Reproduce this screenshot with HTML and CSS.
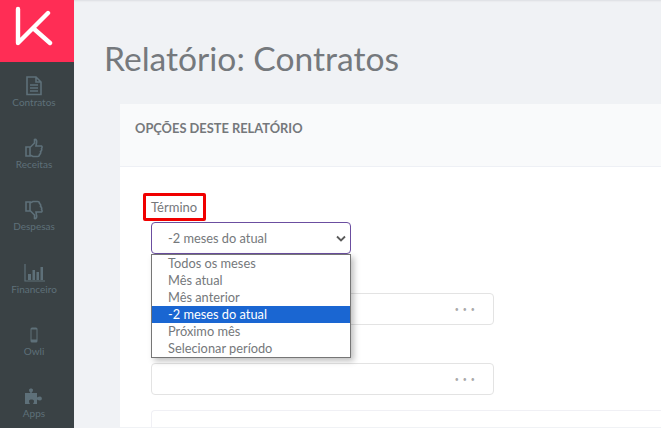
FILE: index.html
```html
<!DOCTYPE html>
<html lang="pt-BR">
<head>
    <meta charset="UTF-8">
    <title>Relatório: Contratos</title>
    <link rel="stylesheet" href="styles.css">
</head>
<body>

    <aside class="sidebar">
        <div class="logo">
            <svg width="38" height="40" viewBox="0 0 38 40">
                <path d="M3 3V37L33 7M18 22L35 37" fill="none" stroke="#fff" stroke-width="4.400" stroke-linecap="round" stroke-linejoin="round"/>
            </svg>
        </div>
        <nav class="nav">
            <a class="nav-item">
                <svg width="18" height="20" viewBox="0 0 18 20"><path d="M2 1H11L16 6V18.500H2ZM11 1V6H16M5 9H13M5 12H13M5 15H13" fill="none" stroke="#5e7079" stroke-width="1.600"/></svg>
                <span>Contratos</span>
            </a>
            <a class="nav-item">
                <svg width="18" height="20" viewBox="0 0 18 20"><path d="M1 9H5V18H1ZM5 9.500L9.500 5V1.500C11.500 1 12 3 11.500 5L11 8H16.500C17.500 8.500 17 10 16.500 10.500C17 12 16.500 13 15.500 13.500C16 15 15.500 16 14.500 16.500C14.500 18 14 18.500 12.500 18.500H8L5 17" fill="none" stroke="#5e7079" stroke-width="1.600"/></svg>
                <span>Receitas</span>
            </a>
            <a class="nav-item">
                <svg width="18" height="20" viewBox="0 0 18 20"><path d="M1 2H5V11H1ZM5 10.500L9.500 15V18.500C11.500 19 12 17 11.500 15L11 12H16.500C17.500 11.500 17 10 16.500 9.500C17 8 16.500 7 15.500 6.500C16 5 15.500 4 14.500 3.500C14.500 2 14 1.500 12.500 1.500H8L5 3" fill="none" stroke="#5e7079" stroke-width="1.600"/></svg>
                <span>Despesas</span>
            </a>
            <a class="nav-item">
                <svg width="21" height="20" viewBox="0 0 21 20"><path d="M1 1V18H21" fill="none" stroke="#5e7079" stroke-width="1.200"/><path d="M4 11H7V17H4ZM8.500 7H11V17H8.500ZM12.500 9H15V17H12.500ZM16.500 4H19V17H16.500Z" fill="#5e7079"/></svg>
                <span>Financeiro</span>
            </a>
            <a class="nav-item">
                <svg width="10" height="20" viewBox="0 0 10 20"><path d="M2 .5H6Q7.500 .5 7.500 2V14Q7.500 15.500 6 15.500H2Q.5 15.500 .5 14V2Q.5 .5 2 .5ZM1.500 2.500V12.500H6.500V2.500Z" fill="#5e7079" fill-rule="evenodd" transform="translate(1 2)"/></svg>
                <span>Owli</span>
            </a>
            <a class="nav-item">
                <svg width="18" height="20" viewBox="0 0 18 20"><path d="M0 6H5.500C5 5 4 4.500 4 3C4 1 8 1 8 3C8 4.500 7 5 6.500 6H12V10.500C13 10 14 9.500 15 9.500C17.500 9.500 17.500 13.500 15 13.500C14 13.500 13 13 12 12.500V17H8C8.500 16 9 15.500 9 14C9 12 4 12 4 14C4 15.500 4.500 16 5 17H0Z" fill="#5e7079"/></svg>
                <span>Apps</span>
            </a>
        </nav>
    </aside>

    <main class="content">
        <h1 class="title">Relatório: Contratos</h1>

        <section class="card">
            <div class="card-header">Opções deste relatório</div>
            <div class="card-body">
                <div class="field-label"><span>Término</span></div>

                <div class="select-wrap">
                    <div class="select">
                        <span>-2 meses do atual</span>
                        <svg width="10" height="7" viewBox="0 0 10 7"><path d="M1 1.500L5 5.500L9 1.500" fill="none" stroke="#5a5a5a" stroke-width="1.800"/></svg>
                    </div>
                    <ul class="menu">
                        <li>Todos os meses</li>
                        <li>Mês atual</li>
                        <li>Mês anterior</li>
                        <li class="selected">-2 meses do atual</li>
                        <li>Próximo mês</li>
                        <li>Selecionar período</li>
                    </ul>
                </div>

                <div class="input first"><span class="dots">• • •</span></div>
                <div class="input"><span class="dots">• • •</span></div>
                <div class="panel"></div>
            </div>
        </section>
    </main>

</body>
</html>
```

FILE: styles.css
```css
*{
    margin: 0;padding:0;
    box-sizing: border-box;
}

body{
    display:flex;
    height:428px;
    width:661px;
    overflow:hidden;
    font-family: Lato, "Liberation Sans", sans-serif;
    background:#f0f2f5;
}

.sidebar{
    width:74px;
    height:428px;
    overflow:hidden;
    flex-shrink:0;
    background:#3a4245;
    display:flex;
    flex-direction: column;
}

.logo{
    height:62px;
    flex-shrink:0;
    background:#ff2d55;
    padding:6px 0 0 15px;
}

.nav{
    display:flex;
    flex-direction: column;
    padding-top:14px;
}

.nav-item{
    height:62.2px;
    flex-shrink:0;
    padding-right:6px;
    display:flex;
    flex-direction: column;
    align-items:center;
    color:#5e7079;
    font-size:10px;
    line-height:13px;
}

.nav-item svg{
    height:20px;
}

.content{
    flex:1;
    min-width:0;
    height:428px;
    overflow:hidden;
    box-shadow: inset 0 2px 2px -1px #dcdee1;
}

.title{
    font-size:33.6px;
    font-weight:400;
    line-height:40px;
    color:#75797d;
    margin:38px 0 26px 30px;
}

.card{
    margin-left:46px;
    background:white;
    border-radius:3px 0 0 0;
}

.card-header{
    height:63px;
    padding:16px 15px 0;
    background:#f9fafb;
    border-bottom:1px solid #eef0f5;
    color:#75787b;
    font-size:12.85px;
    font-weight:700;
    line-height:16px;
    text-transform:uppercase;
}

.card-body{
    padding:26px 0 0 31px;
    height:260px;
}

.field-label{
    margin-left:-8px;
    width:63px;
    height:28px;
    border:3px solid #f00000;
    border-radius:2px;
    padding-left:5px;
    font-size:13px;
    line-height:23px;
    color:#75787b;
}

.select-wrap{
    position:relative;
    width:200px;
    margin-top:1px;
}

.select{
    height:32px;
    border:1px solid #6b4ea0;
    border-radius:4px;
    padding:0 3px 0 16px;
    display:flex;
    justify-content:space-between;
    align-items:center;
    color:#75787b;
    font-size:12.8px;
}

.select svg{
    margin-right:1px;
}

.menu{
    position:absolute;
    top:32px;
    left:0;
    width:200px;
    height:104px;
    list-style:none;
    background:white;
    border:1px solid #767676;
    box-shadow: 3px 3px 6px rgba(0, 0, 0, 0.25);
    color:#75787b;
    font-size:12.8px;
    line-height:17px;
}

.menu li{
    padding-left:16px;
}

.menu .selected{
    background:#1a66d2;
    color:white;
}

.input{
    width:343px;
    height:32px;
    margin-top:38px;
    border:1px solid #e3e3e3;
    border-radius:4px;
    display:flex;
    justify-content:flex-end;
    align-items:center;
    padding-right:17px;
}

.input.first{
    margin-top:39px;
}

.dots{
    color:#aaa;
    font-size:7px;
    letter-spacing:1.100px;
}

.panel{
    margin-top:15px;
    height:60px;
    border:1px solid #f0f0f5;
    border-right:none;
    border-radius:4px 0 0 0;
}
```
